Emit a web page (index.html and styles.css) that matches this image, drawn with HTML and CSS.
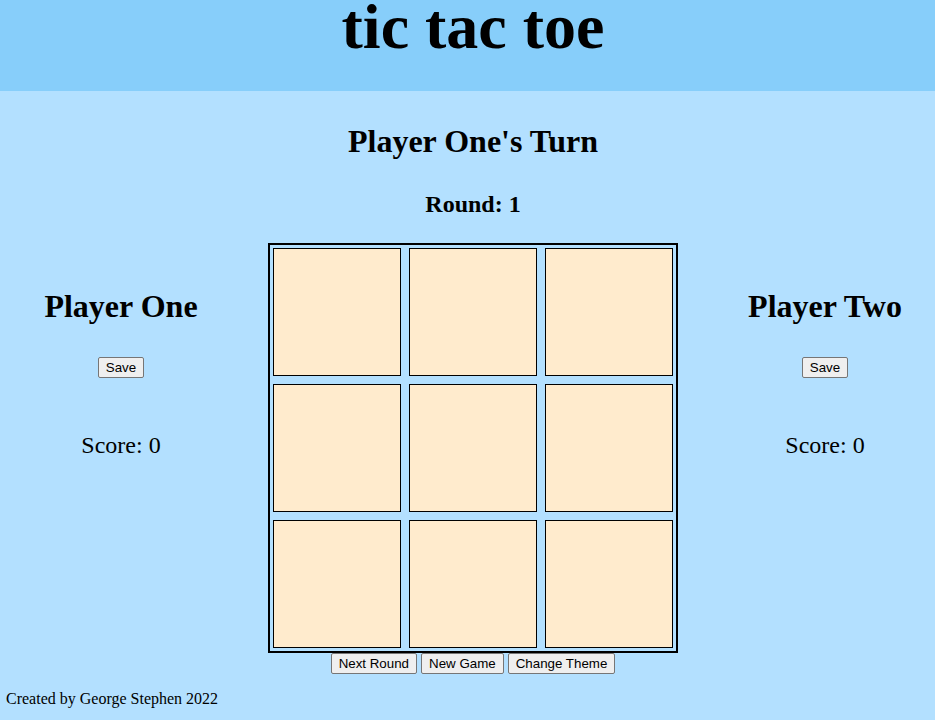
FILE: index.html
```html
<!DOCTYPE html>
<html lang="en">
<head>
<meta charset="utf-8">
<title>tic tac toe</title>
<link rel="stylesheet" href="styles.css">
</head>
<body>
<header class="header">
  <h1 class="title">tic tac toe</h1>
</header>
<main class="main">
  <h1 class="turn">Player One's Turn</h1>
  <h2 class="round">Round: 1</h2>
  <div class="game">
    <section class="player">
      <h1 class="player-name">Player One</h1>
      <div class="save-row"><button class="btn">Save</button></div>
      <p class="score">Score: 0</p>
    </section>
    <div class="board-wrap">
      <div class="board">
        <div class="cell"></div><div class="cell"></div><div class="cell"></div>
        <div class="cell"></div><div class="cell"></div><div class="cell"></div>
        <div class="cell"></div><div class="cell"></div><div class="cell"></div>
      </div>
      <div class="controls">
        <button class="btn">Next Round</button>
        <button class="btn">New Game</button>
        <button class="btn">Change Theme</button>
      </div>
    </div>
    <section class="player">
      <h1 class="player-name">Player Two</h1>
      <div class="save-row"><button class="btn">Save</button></div>
      <p class="score">Score: 0</p>
    </section>
  </div>
</main>
<footer class="footer">Created by George Stephen 2022</footer>
</body>
</html>
```
FILE: styles.css
```css
html, body {
  margin: 0;
  padding: 0;
}
body {
  background: #b3e0ff;
  color: #000;
  font-family: "Liberation Serif", "Times New Roman", serif;
  font-size: 16px;
}
.header {
  background: #87cefa;
  height: 91px;
  padding-left: 11px;
  text-align: center;
}
.title {
  margin: 0;
  font-size: 64px;
  font-weight: bold;
  line-height: 54px;
}
.main {
  padding-left: 11px;
  text-align: center;
}
.turn {
  margin: 32px 0 0;
  font-size: 32px;
  line-height: 37px;
}
.round {
  margin: 30px 0 0;
  font-size: 24px;
  line-height: 28px;
}
.game {
  display: flex;
  justify-content: space-between;
  margin-top: 25px;
}
.player {
  width: 220px;
}
.player-name {
  margin: 45px 0 0;
  font-size: 32px;
  line-height: 37px;
}
.save-row {
  margin-top: 32px;
  display: flex;
  justify-content: center;
}
.score {
  margin: 53px 0 0;
  font-size: 24px;
  line-height: 28px;
}
.board-wrap {
  width: 410px;
}
.board {
  display: grid;
  grid-template-columns: repeat(3, 128px);
  grid-auto-rows: 128px;
  gap: 8px;
  padding: 3px;
  border: 2px solid #000;
}
.cell {
  box-sizing: border-box;
  border: 1px solid #000;
  background: #ffebcd;
}
.controls {
  display: flex;
  justify-content: center;
  gap: 4px;
}
.btn {
  font-family: "Liberation Sans", Arial, sans-serif;
  font-size: 13.333px;
  line-height: 17px;
  padding: 1px 7px;
  border: 1px solid #767676;
  border-radius: 2px;
  background: #efefef;
  color: #000;
  margin: 0;
}
.footer {
  margin: 16px 0 0 6px;
  line-height: 18px;
}
```
